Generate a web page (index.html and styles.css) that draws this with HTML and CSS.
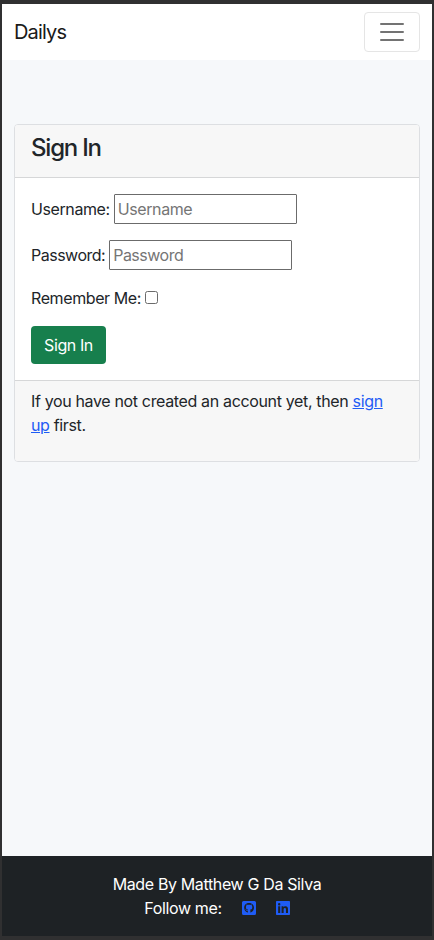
FILE: index.html
```html
<!DOCTYPE html>
<html lang="en">
<head>
<meta charset="utf-8">
<title>Dailys</title>
<link rel="stylesheet" href="styles.css">
</head>
<body>
<nav class="navbar">
  <a class="brand" href="#">Dailys</a>
  <button class="toggler" type="button" aria-label="Toggle navigation">
    <svg width="30" height="30" viewBox="0 0 30 30" fill="none" stroke="#000" stroke-opacity=".55" stroke-width="2" stroke-linecap="round"><path d="M4 7h22M4 15h22M4 23h22"/></svg>
  </button>
</nav>
<main class="content">
  <section class="card">
    <header class="card-header"><h1>Sign In</h1></header>
    <form class="card-body">
      <div class="field"><label for="username">Username:</label><input class="text-input" id="username" type="text" placeholder="Username"></div>
      <div class="field field-password"><label for="password">Password:</label><input class="text-input" id="password" type="password" placeholder="Password"></div>
      <div class="remember"><label for="remember">Remember Me:</label><input class="check" id="remember" type="checkbox"></div>
      <button class="submit" type="button">Sign In</button>
    </form>
    <footer class="card-footer">If you have not created an account yet, then <a href="#">sign<br>up</a> first.</footer>
  </section>
</main>
<footer class="site-footer">
  <div class="author">Made By Matthew G Da Silva</div>
  <div class="follow"><span>Follow me:</span>
    <a href="#" aria-label="GitHub"><svg width="14" height="16" viewBox="0 0 448 512" fill="currentColor"><path fill-rule="evenodd" d="M48 32h352a48 48 0 0 1 48 48v352a48 48 0 0 1-48 48H48a48 48 0 0 1-48-48V80a48 48 0 0 1 48-48zM224 96C136 96 69 160 69 248c0 70 44 130 107 152 8 1 11-4 11-9v-40c-44 10-54-19-54-19-7-18-18-23-18-23-14-10 1-10 1-10 16 1 25 17 25 17 14 24 38 17 47 13 1-10 6-18 10-22-35-4-73-18-73-78 0-19 6-31 17-43-2-5-7-21 2-42 13-4 44 17 44 17 24-7 54-7 78 0 0 0 31-21 44-17 9 21 4 37 2 42 11 12 18 24 18 43 0 60-37 74-73 78 6 5 11 15 11 30v54c0 5 3 10 11 9 63-22 105-82 105-152 0-88-72-152-160-152z"/></svg></a>
    <a href="#" aria-label="LinkedIn"><svg width="14" height="16" viewBox="0 0 448 512" fill="currentColor"><path fill-rule="evenodd" d="M416 32H32C14 32 0 47 0 64v384c0 18 14 32 32 32h384c18 0 32-14 32-32V64c0-17-14-32-32-32zM135 416H69V202h66v214zM102 173a38 38 0 1 1 0-77 38 38 0 0 1 0 77zM384 416h-66V312c0-25 0-57-34-57-35 0-40 27-40 55v106h-66V202h63v29h1c9-17 31-34 63-34 67 0 79 44 79 102v117z"/></svg></a>
  </div>
</footer>
</body>
</html>
```
FILE: styles.css
```css
* { box-sizing: border-box; }
body {
  margin: 0;
  height: 940px;
  display: flex;
  flex-direction: column;
  border: solid #303031;
  border-width: 4px 2px;
  background: #f6f8fa;
  color: #212529;
  font: 16px/24px Inter, "Liberation Sans", sans-serif;
  letter-spacing: -0.4px;
}
.navbar {
  height: 56px;
  padding: 8px 12px;
  display: flex;
  align-items: center;
  justify-content: space-between;
  background: #fff;
}
.brand { color: #1a1a1a; text-decoration: none; font-size: 20px; line-height: 30px; letter-spacing: -0.85px; }
.toggler {
  width: 56px;
  height: 40px;
  padding: 0;
  display: flex;
  align-items: center;
  justify-content: center;
  border: 1px solid #e5e5e5;
  border-radius: 4px;
  background: transparent;
}
.content { flex: 1; padding: 64px 12px 0; }
.card {
  height: 338px;
  display: flex;
  flex-direction: column;
  border: 1px solid #dddfe2;
  border-radius: 4px;
  background: #fff;
  overflow: hidden;
}
.card-header { height: 53px; padding: 8px 16px; background: #f7f7f7; border-bottom: 1px solid #d6d7d8; }
.card-header h1 { margin: 0; font-size: 24px; line-height: 29px; font-weight: 500; letter-spacing: -1.2px; }
.card-body { height: 202px; padding: 16px 16px 0; }
.field { display: flex; align-items: center; gap: 4px; height: 30px; margin-bottom: 16px; }
.field-password { letter-spacing: -0.5px; }
.text-input {
  width: 183px;
  height: 30px;
  padding: 1px 3px;
  border: 1px solid #6b6b6b;
  border-radius: 1px;
  background: #fff;
  font: inherit;
  letter-spacing: inherit;
}
.text-input::placeholder { color: #757575; opacity: 1; }
.remember { display: flex; align-items: center; gap: 4px; height: 24px; margin-bottom: 16px; }
.check {
  appearance: none;
  width: 13px;
  height: 13px;
  margin: 0 0 2px;
  border: 1px solid #6b6b6b;
  border-radius: 2.5px;
  background: #fff;
}
.submit {
  display: block;
  width: 75px;
  height: 38px;
  padding: 0;
  border: 0;
  border-radius: 4px;
  background: #177f4d;
  color: #fff;
  font: inherit;
  letter-spacing: inherit;
}
.card-footer { flex: 1; padding: 8px 16px; background: #f7f7f7; border-top: 1px solid #d6d7d8; letter-spacing: -0.35px; }
.card-footer a { color: #1f5cf5; }
.site-footer { height: 80px; padding-top: 16px; background: #1e2225; color: #fff; text-align: center; letter-spacing: -0.36px; }
.follow { display: flex; justify-content: center; }
.follow a { display: flex; align-items: center; margin-left: 20px; color: #1f5cf5; }
```
